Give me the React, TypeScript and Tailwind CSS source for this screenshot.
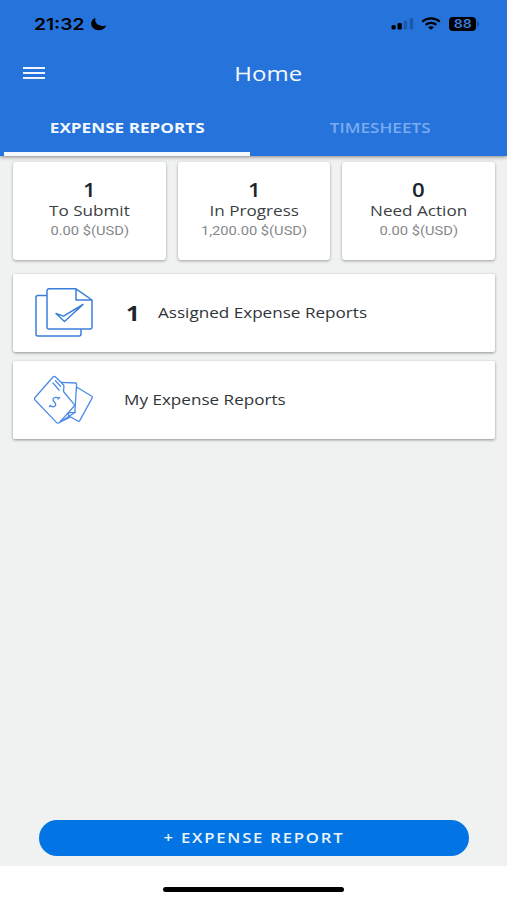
import clsx from 'clsx';

interface Summary {
    count: number;
    label: string;
    amount: string;
}

const summaries: Summary[] = [
    { count: 1, label: 'To Submit', amount: '0.00 $(USD)' },
    { count: 1, label: 'In Progress', amount: '1,200.00 $(USD)' },
    { count: 0, label: 'Need Action', amount: '0.00 $(USD)' },
];

function StatusBar() {
    return (
        <div className="flex h-[47px] items-center justify-between pl-[34px] pr-[28px] text-black">
            <div className="flex items-center">
                <span className="w-[51px] whitespace-nowrap font-['Inter',sans-serif] text-[16px] font-semibold leading-none">
                    <span className="inline-block origin-left scale-x-[1.2]">21:32</span>
                </span>
                <svg className="ml-[6px] h-[14px] w-[16px]" viewBox="0 0 16 14">
                    <path d="M4.500.7C1.800 1.800.2 4 .2 6.600c0 3.800 3.300 6.700 7.600 6.700 3.400 0 6.300-2 7.400-4.900-.9.300-1.800.5-2.800.5C8.200 8.900 4.200 6.600 4.200 2.900c0-.8.100-1.500.3-2.200Z" />
                </svg>
            </div>
            <div className="flex items-center">
                <svg className="h-[13px] w-[24px]" viewBox="0 0 24 13">
                    <rect x="0.500" y="8" width="4.300" height="4.500" rx="1.500" />
                    <rect x="6.500" y="6" width="4.300" height="6.500" rx="1.300" />
                    <rect x="12.700" y="3.500" width="3.500" height="9" rx="1.300" opacity=".22" />
                    <rect x="18.700" y="1" width="3.500" height="11.500" rx="1.300" opacity=".22" />
                </svg>
                <svg className="ml-[6px] h-[13px] w-[20px]" viewBox="0 0 20 13" fill="none" stroke="currentColor">
                    <path d="M1.200 4.700C6.100.3 13.900.3 18.800 4.700" strokeWidth="2.200" />
                    <path d="M4.600 7.900c3-2.600 7.800-2.600 10.800 0" strokeWidth="2.200" />
                    <path d="M10 12.800 7 10.200c1.700-1.300 4.300-1.300 6 0Z" fill="currentColor" stroke="none" />
                </svg>
                <div className="ml-[8px] flex h-[14px] w-[27px] items-center justify-center rounded-[4px] bg-black">
                    <span className="inline-block scale-x-[1.17] pl-px font-['Inter',sans-serif] text-[12px] font-semibold leading-none text-[#3c7fdd]">88</span>
                </div>
                <div className="ml-px h-[6px] w-[2px] rounded-r-full bg-black/25" />
            </div>
        </div>
    );
}

function Tab({ label, active }: { label: string; active?: boolean }) {
    return (
        <button
            className={clsx(
                'flex h-[53px] items-center justify-center border-b-4 text-[14px] leading-none',
                active ? 'border-[#f5faff] font-bold text-[#f3f8ff]' : 'border-transparent pl-[3px] font-semibold text-[#79abf0]'
            )}
        >
            <span className="inline-block scale-x-[1.225] whitespace-nowrap">{label}</span>
        </button>
    );
}

function Header() {
    return (
        <header className="relative h-[156px] bg-[#2573db] shadow-[0_1px_4px_rgba(0,0,0,0.45)]">
            <StatusBar />
            <div className="grid h-[56px] grid-cols-[1fr_auto_1fr] items-center pl-[29px]">
                <button className="-ml-[6px] mb-[5px] flex w-[22px] flex-col gap-[3px]" aria-label="Menu">
                    <span className="h-[2px] w-full bg-[#eef5ff]" />
                    <span className="h-[2px] w-full bg-[#eef5ff]" />
                    <span className="h-[2px] w-full bg-[#eef5ff]" />
                </button>
                <h1 className="mb-[2px] scale-x-[1.2] text-[20px] leading-none text-[#f5faff]">Home</h1>
            </div>
            <nav className="grid grid-cols-[246px_1fr] pl-[4px]">
                <Tab label="EXPENSE REPORTS" active />
                <Tab label="TIMESHEETS" />
            </nav>
        </header>
    );
}

function SummaryCard({ count, label, amount }: Summary) {
    return (
        <div className="flex h-[98px] flex-col items-center rounded-[3px] bg-white pt-[18px] shadow-[0_1px_3px_rgba(0,0,0,0.35)]">
            <span className="scale-x-[1.17] text-[19px] font-semibold leading-[20px] text-[#1d262d]">{count}</span>
            <span className="scale-x-[1.14] whitespace-nowrap text-[15px] leading-[20px] text-[#3a3f44]">{label}</span>
            <span className="scale-x-[1.13] whitespace-nowrap pt-px font-['Roboto',sans-serif] text-[13px] leading-[20px] text-[#85888b]">{amount}</span>
        </div>
    );
}

function AssignedIcon() {
    return (
        <svg className="h-[50px] w-[60px]" viewBox="0 0 60 50" fill="none" stroke="#3b7fd9" strokeWidth="1.500" strokeLinejoin="round">
            <path d="M13 7.500H4a2 2 0 0 0-2 2v36.500a2 2 0 0 0 2 2h41a2 2 0 0 0 2-2V41" />
            <path d="M42 .8H15a2 2 0 0 0-2 2v36.200a2 2 0 0 0 2 2h41a2 2 0 0 0 2-2V12L42 .8V12h16" />
            <path d="m22 25.500 7.500 2.600L49 16.500 30.500 33.500Z" />
        </svg>
    );
}

function ReceiptsIcon() {
    return (
        <svg className="h-[50px] w-[60px]" viewBox="0 0 60 50" fill="white" stroke="#4c8ce6" strokeWidth="1.300" strokeLinejoin="round" strokeLinecap="round">
            <path d="m43 12.300 14.800 9c.6.400.8 1 .4 1.600L45.600 45.900c-.4.600-.9.700-1.500.3L34 40.500Z" />
            <path d="M24.500 48 36 42.200l-2.500-3.700M25 47.500l16.500-10.300" />
            <path d="m27 7.300 14.500.7a1.200 1.200 0 0 1 1.100 1.200L40.900 36.500a1.200 1.200 0 0 1-1.200 1.200L34 37.500Z" />
            <path d="M19.300 1.800.8 22.800a1.500 1.500 0 0 0 0 2L22.600 47.600a1.800 1.800 0 0 0 2.600 0L40.300 31a1 1 0 0 0 0-1.300L29.500 16.500l.4-5.200a2 2 0 0 0-.5-1.500L21.300 1.800a1.400 1.400 0 0 0-2 0Z" />
            <path d="m19 8 6 7M21.500 5.800l5 5.400" fill="none" />
            <path d="M25 23.300c-3-1.800-6.300-.8-6 1.500.3 2 3.400 3 2.700 5.300-.7 2.100-3.800 2.200-5.700.3M24 24l1.700-1.500M15.500 31.500l1-1" fill="none" />
        </svg>
    );
}

export default function App() {
    return (
        <div className="flex h-[900px] w-[507px] flex-col overflow-hidden bg-[#eff2f1] font-['Open_Sans','Noto_Sans',sans-serif]">
            <Header />
            <main className="flex grow flex-col pl-[13px] pr-[12px] pt-[6px]">
                <section className="grid grid-cols-3 gap-[12px]">
                    {summaries.map((s) => (
                        <SummaryCard key={s.label} {...s} />
                    ))}
                </section>

                <button className="mt-[14px] flex h-[78px] items-center rounded-[2px] bg-white pl-[21px] text-left text-[#2f3438] shadow-[0_1px_3px_rgba(0,0,0,0.4)]">
                    <AssignedIcon />
                    <span className="ml-[32px] w-[32px] text-[21px] font-bold leading-none text-[#1d262d]">
                        <span className="inline-block origin-left scale-x-[1.15]">1</span>
                    </span>
                    <span className="mb-[2px] origin-left scale-x-[1.14] text-[15px] leading-none">Assigned Expense Reports</span>
                </button>
                <button className="mt-[9px] flex h-[78px] items-center rounded-[2px] bg-white pl-[21px] text-left text-[#2f3438] shadow-[0_1px_3px_rgba(0,0,0,0.4)]">
                    <ReceiptsIcon />
                    <span className="mb-[2px] ml-[30px] origin-left scale-x-[1.14] text-[15px] leading-none">My Expense Reports</span>
                </button>

                <button className="mx-[26px] mb-[10px] mt-auto flex h-[36px] items-center justify-center rounded-full bg-[#0274e3] text-[14px] font-semibold leading-none text-[#e9f4ff]">
                    <span className="inline-block scale-x-[1.19] whitespace-nowrap tracking-[1.5px]">+ EXPENSE REPORT</span>
                </button>
            </main>
            <footer className="flex h-[34px] justify-center bg-white pt-[21px]">
                <div className="h-[5px] w-[181px] rounded-full bg-black" />
            </footer>
        </div>
    );
}
